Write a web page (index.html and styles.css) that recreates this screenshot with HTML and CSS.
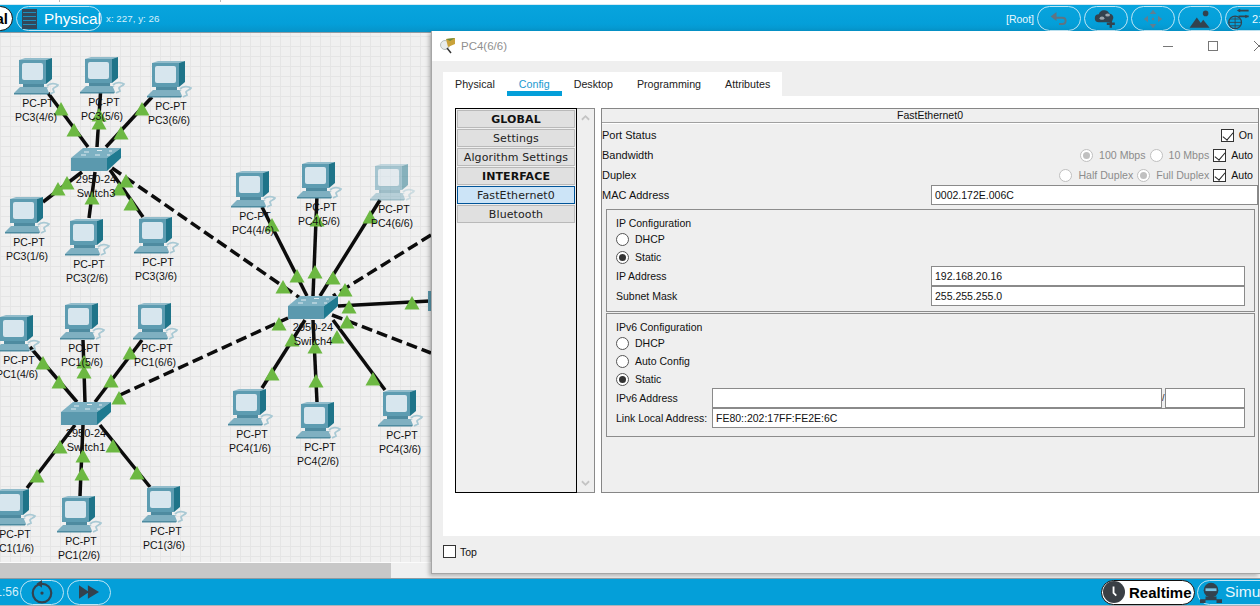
FILE: index.html
```html
<!DOCTYPE html>
<html lang="en">
<head>
<meta charset="utf-8">
<title>Packet Tracer</title>
<link rel="stylesheet" href="styles.css">
</head>
<body>
<div class="app">
  <div class="strip"><i class="tick"></i><i class="tick"></i></div>
  <header class="topbar">
    <div class="cluster">
      <div class="pill pill-active pill-logical">Logical</div>
      <div class="pill pill-physical">
        <svg class="ico-rack" viewBox="0 0 15 20"><rect width="15" height="20" fill="#33485a"/><path d="M1 3.500h13M1 7.500h13M1 11.500h13M1 15.500h13" stroke="#1d8fbd" stroke-width="1.200"/></svg>
        <span>Physical</span>
      </div>
      <span class="coords">x: 227, y: 26</span>
    </div>
    <div class="cluster cluster-right">
      <span class="root">[Root]</span>
      <div class="pill pill-tool">
        <svg viewBox="0 0 24 20" class="ico"><path d="M8 8.500h8c3 0 4 1.500 4 3.500s-1 4-4 4h-4" fill="none" stroke="#5f7482" stroke-width="2.200"/><path d="M9 1.500 2 7l7 5.500z" fill="#5f7482"/></svg>
      </div>
      <div class="pill pill-tool">
        <svg viewBox="0 0 30 24" class="ico ico-w"><path d="M6 16a5 5 0 0 1 0-10 7 7 0 0 1 13-1 5.500 5.500 0 0 1 4 9l-1 2z" fill="#33424e"/><ellipse cx="10" cy="11" rx="3" ry="2" fill="#9aa5ad"/><ellipse cx="17" cy="7" rx="3" ry="2" fill="#9aa5ad"/><path d="M21 13v10M16 18h10" stroke="#33424e" stroke-width="3"/></svg>
      </div>
      <div class="pill pill-tool">
        <svg viewBox="0 0 24 24" class="ico"><path d="M12 1l4 5H8zM12 23l-4-5h8zM1 12l5-4v8zM23 12l-5 4V8z" fill="#5f7f92"/><circle cx="12" cy="12" r="1.500" fill="#5f7f92"/></svg>
      </div>
      <div class="pill pill-tool">
        <svg viewBox="0 0 30 24" class="ico ico-w"><path d="M2 23 11 10l5 7 3-4 8 10z" fill="#33424e"/><circle cx="22" cy="5" r="3.500" fill="#33424e"/></svg>
      </div>
      <div class="pill pill-tool pill-last">
        <svg viewBox="0 0 26 26" class="ico-globe"><circle cx="9" cy="17" r="7.500" fill="none" stroke="#33424e" stroke-width="1.500"/><path d="M1.500 17h15M9 9.500v15M3 13h12M3 21h12" stroke="#33424e"/><path d="M13 3h12M13 10h12" stroke="#33424e" stroke-width="2"/><path d="M15 1l-4 2 4 2zM21 8l4 2-4 2z" fill="#33424e"/></svg>
        <span class="pill-num">21</span>
      </div>
    </div>
  </header>

  <main class="workspace">
    <svg class="diagram" viewBox="0 33 1260 529">
      <defs>
        <symbol id="pc" viewBox="0 0 46 37" width="46" height="37" overflow="visible">
          <path d="M33 28c3-3 8-3 11-1-1 2-4 2-5 4l1 3-4 2" fill="none" stroke="#a9c9d4" stroke-width="1.800"/>
          <path d="M5 2 11 0h27l-6 2z" fill="#92bccb"/>
          <path d="M32 2l6-2v21l-6 5z" fill="#1f7489"/>
          <rect x="5" y="2" width="27" height="24" fill="#5d9cb1"/>
          <rect x="8" y="5" width="21" height="17" rx="2" fill="#d7e6ee"/>
          <rect x="9" y="26" width="21" height="3" fill="#4e8ba0"/>
          <path d="M6 29h26l3 1H5z" fill="#7eafc0"/>
          <path d="M5 30h28l2 5H0z" fill="#7fb0c1"/>
          <path d="M0 35h35l-1 1.500H0z" fill="#4e8ba0"/>
        </symbol>
        <symbol id="sw" viewBox="0 0 50 24" width="50" height="24" overflow="visible">
          <path d="M0 11 12 1h38L36 11z" fill="#7db1c3"/>
          <path d="M36 11 50 1v10L36 24z" fill="#1f7a90"/>
          <rect y="11" width="36" height="13" fill="#5b99ae"/>
          <path d="M13 5h5M26 3.500h5M10 8h5M24 8h5M38 4h3M36 8h3" stroke="#dfecf1" stroke-width="1.200"/>
        </symbol>
        <polygon id="tri" points="-7.500,6.500 0,-7 7.500,6.500" fill="#6cb842"/>
      </defs>

      <g class="links">
        <line x1="48" y1="93" x2="88" y2="147"/><line x1="101" y1="85" x2="97" y2="147"/><line x1="152" y1="97" x2="106" y2="147"/>
        <line x1="43" y1="202" x2="82" y2="172"/><line x1="89" y1="218" x2="95" y2="172"/><line x1="143" y1="217" x2="110" y2="170"/>
        <line x1="262" y1="207" x2="307" y2="296"/><line x1="317" y1="195" x2="313" y2="296"/><line x1="380" y1="200" x2="320" y2="296"/>
        <line x1="338" y1="306" x2="430" y2="301"/>
        <line x1="262" y1="388" x2="305" y2="320"/><line x1="317" y1="402" x2="313" y2="320"/><line x1="385" y1="390" x2="333" y2="320"/>
        <line x1="30" y1="347" x2="77" y2="402"/><line x1="83" y1="340" x2="85" y2="402"/><line x1="142" y1="340" x2="95" y2="402"/>
        <line x1="27" y1="488" x2="75" y2="425"/><line x1="80" y1="496" x2="83" y2="425"/><line x1="150" y1="487" x2="100" y2="425"/>
      </g>
      <g class="links links-dashed">
        <line x1="112" y1="168" x2="300" y2="298"/><line x1="431" y1="235" x2="333" y2="296"/>
        <line x1="332" y1="315" x2="431" y2="353"/><line x1="120" y1="395" x2="288" y2="318"/>
      </g>
      <rect class="edge-device" x="428" y="291" width="4" height="20"/>

      <use href="#tri" x="61" y="109"/><use href="#tri" x="74" y="130"/><use href="#tri" x="99" y="115"/><use href="#tri" x="99" y="123"/>
      <use href="#tri" x="142" y="109"/><use href="#tri" x="121" y="133"/><use href="#tri" x="67" y="183"/><use href="#tri" x="58" y="189"/>
      <use href="#tri" x="92" y="198"/><use href="#tri" x="119" y="189"/><use href="#tri" x="126" y="181"/><use href="#tri" x="131" y="204"/>
      <use href="#tri" x="272" y="225"/><use href="#tri" x="317" y="220"/><use href="#tri" x="370" y="217"/><use href="#tri" x="297" y="276"/>
      <use href="#tri" x="315" y="272"/><use href="#tri" x="333" y="278"/><use href="#tri" x="283" y="287"/><use href="#tri" x="345" y="290"/>
      <use href="#tri" x="349" y="307"/><use href="#tri" x="347" y="322"/><use href="#tri" x="412" y="303"/><use href="#tri" x="337" y="337"/>
      <use href="#tri" x="279" y="324"/><use href="#tri" x="292" y="340"/><use href="#tri" x="315" y="347"/><use href="#tri" x="272" y="374"/>
      <use href="#tri" x="316" y="381"/><use href="#tri" x="373" y="379"/>
      <use href="#tri" x="43" y="363"/><use href="#tri" x="59" y="382"/><use href="#tri" x="84" y="362"/><use href="#tri" x="84" y="372"/>
      <use href="#tri" x="130" y="353"/><use href="#tri" x="111" y="381"/><use href="#tri" x="119" y="398"/><use href="#tri" x="60" y="447"/>
      <use href="#tri" x="37" y="476"/><use href="#tri" x="83" y="456"/><use href="#tri" x="82" y="474"/><use href="#tri" x="113" y="446"/><use href="#tri" x="137" y="473"/>

      <g class="node" transform="translate(14 58)"><use href="#pc"/><text x="24" y="49">PC-PT</text><text x="22" y="63">PC3(4/6)</text></g>
      <g class="node" transform="translate(80 57)"><use href="#pc"/><text x="24" y="49">PC-PT</text><text x="22" y="63">PC3(5/6)</text></g>
      <g class="node" transform="translate(147 61)"><use href="#pc"/><text x="24" y="49">PC-PT</text><text x="22" y="63">PC3(6/6)</text></g>
      <g class="node" transform="translate(5 197)"><use href="#pc"/><text x="24" y="49">PC-PT</text><text x="22" y="63">PC3(1/6)</text></g>
      <g class="node" transform="translate(65 219)"><use href="#pc"/><text x="24" y="49">PC-PT</text><text x="22" y="63">PC3(2/6)</text></g>
      <g class="node" transform="translate(134 217)"><use href="#pc"/><text x="24" y="49">PC-PT</text><text x="22" y="63">PC3(3/6)</text></g>
      <g class="node" transform="translate(231 171)"><use href="#pc"/><text x="24" y="49">PC-PT</text><text x="22" y="63">PC4(4/6)</text></g>
      <g class="node" transform="translate(297 162)"><use href="#pc"/><text x="24" y="49">PC-PT</text><text x="22" y="63">PC4(5/6)</text></g>
      <g class="node" transform="translate(370 164)"><use class="faded" href="#pc"/><text x="24" y="49">PC-PT</text><text x="22" y="63">PC4(6/6)</text></g>
      <g class="node" transform="translate(228 389)"><use href="#pc"/><text x="24" y="49">PC-PT</text><text x="22" y="63">PC4(1/6)</text></g>
      <g class="node" transform="translate(296 402)"><use href="#pc"/><text x="24" y="49">PC-PT</text><text x="22" y="63">PC4(2/6)</text></g>
      <g class="node" transform="translate(378 390)"><use href="#pc"/><text x="24" y="49">PC-PT</text><text x="22" y="63">PC4(3/6)</text></g>
      <g class="node" transform="translate(-5 315)"><use href="#pc"/><text x="24" y="49">PC-PT</text><text x="22" y="63">PC1(4/6)</text></g>
      <g class="node" transform="translate(60 303)"><use href="#pc"/><text x="24" y="49">PC-PT</text><text x="22" y="63">PC1(5/6)</text></g>
      <g class="node" transform="translate(133 303)"><use href="#pc"/><text x="24" y="49">PC-PT</text><text x="22" y="63">PC1(6/6)</text></g>
      <g class="node" transform="translate(-9 489)"><use href="#pc"/><text x="24" y="49">PC-PT</text><text x="22" y="63">PC1(1/6)</text></g>
      <g class="node" transform="translate(57 496)"><use href="#pc"/><text x="24" y="49">PC-PT</text><text x="22" y="63">PC1(2/6)</text></g>
      <g class="node" transform="translate(142 486)"><use href="#pc"/><text x="24" y="49">PC-PT</text><text x="22" y="63">PC1(3/6)</text></g>

      <g class="node node-switch" transform="translate(71 147)"><use href="#sw"/><text x="25" y="36">2950-24</text><text x="25" y="50">Switch3</text></g>
      <g class="node node-switch" transform="translate(288 295)"><use href="#sw"/><text x="25" y="36">2950-24</text><text x="25" y="50">Switch4</text></g>
      <g class="node node-switch" transform="translate(61 401)"><use href="#sw"/><text x="25" y="36">2950-24</text><text x="25" y="50">Switch1</text></g>
    </svg>
    <div class="hscroll"><div class="hscroll-thumb"></div></div>

    <section class="dialog">
      <div class="titlebar">
        <svg class="title-ico" viewBox="0 0 16 16"><circle cx="5" cy="7" r="4.500" fill="#e8eceb" stroke="#b5bdb9"/><path d="M6 1l9-1v6l-7 3z" fill="#c9a23a"/><path d="M6 1l9-1-5 3z" fill="#6c8a3a"/><path d="M7 10l4 5" stroke="#333" stroke-width="1.500"/></svg>
        <span class="title-text">PC4(6/6)</span>
        <span class="win-min"></span>
        <span class="win-max"></span>
        <svg class="win-close" viewBox="0 0 10 10"><path d="M0 0l10 10M0 10 10 0" stroke="#6f6f6f" fill="none"/></svg>
      </div>
      <nav class="tabs">
        <span class="tab">Physical</span>
        <span class="tab tab-on">Config</span>
        <span class="tab">Desktop</span>
        <span class="tab">Programming</span>
        <span class="tab">Attributes</span>
      </nav>
      <div class="panel">
        <aside class="sidebar">
          <ul class="menu">
            <li class="menu-item menu-head">GLOBAL</li>
            <li class="menu-item">Settings</li>
            <li class="menu-item">Algorithm Settings</li>
            <li class="menu-item menu-head">INTERFACE</li>
            <li class="menu-item menu-sel">FastEthernet0</li>
            <li class="menu-item">Bluetooth</li>
          </ul>
          <div class="vscroll">
            <svg class="chev" viewBox="0 0 10 7"><path d="M1 6l4-4 4 4" fill="none" stroke="#c4c4c4" stroke-width="2"/></svg>
            <svg class="chev" viewBox="0 0 10 7"><path d="M1 1l4 4 4-4" fill="none" stroke="#c4c4c4" stroke-width="2"/></svg>
          </div>
        </aside>
        <div class="details">
          <div class="details-head">FastEthernet0</div>
          <div class="row">
            <span class="row-label">Port Status</span>
            <span class="opts"><i class="check"></i><span class="opt-text">On</span></span>
          </div>
          <div class="row">
            <span class="row-label">Bandwidth</span>
            <span class="opts opts-off">
              <i class="radio radio-off radio-dot"></i><span class="opt-text">100 Mbps</span>
              <i class="radio radio-off"></i><span class="opt-text">10 Mbps</span>
              <i class="check"></i><span class="opt-text opt-on">Auto</span>
            </span>
          </div>
          <div class="row">
            <span class="row-label">Duplex</span>
            <span class="opts opts-off">
              <i class="radio radio-off"></i><span class="opt-text">Half Duplex</span>
              <i class="radio radio-off radio-dot"></i><span class="opt-text">Full Duplex</span>
              <i class="check"></i><span class="opt-text opt-on">Auto</span>
            </span>
          </div>
          <div class="row">
            <span class="row-label row-label-mac">MAC Address</span>
            <div class="field field-mac">0002.172E.006C</div>
          </div>

          <div class="group group-v4">
            <div class="group-title">IP Configuration</div>
            <div class="choice"><i class="radio"></i>DHCP</div>
            <div class="choice"><i class="radio radio-dot"></i>Static</div>
            <div class="frow"><span class="flabel">IP Address</span><div class="field field-v4">192.168.20.16</div></div>
            <div class="frow"><span class="flabel">Subnet Mask</span><div class="field field-v4">255.255.255.0</div></div>
          </div>
          <div class="group group-v6">
            <div class="group-title">IPv6 Configuration</div>
            <div class="choice"><i class="radio"></i>DHCP</div>
            <div class="choice"><i class="radio"></i>Auto Config</div>
            <div class="choice"><i class="radio radio-dot"></i>Static</div>
            <div class="frow"><span class="flabel flabel-v6">IPv6 Address</span><div class="field field-v6"></div><span class="slash">/</span><div class="field field-prefix"></div></div>
            <div class="frow"><span class="flabel flabel-v6">Link Local Address:</span><div class="field field-link">FE80::202:17FF:FE2E:6C</div></div>
          </div>
        </div>
      </div>
      <footer class="dialog-foot"><i class="check check-empty"></i><span>Top</span></footer>
    </section>
  </main>

  <footer class="bottombar">
    <div class="cluster">
      <span class="clock-text">00:01:56</span>
      <div class="pill pill-tool">
        <svg viewBox="0 0 22 22" class="ico ico-big"><circle cx="11" cy="12" r="8.500" fill="none" stroke="#33424e" stroke-width="2"/><circle cx="11" cy="12" r="1.500" fill="#33424e"/><path d="M11 0l-5 3.500L11 7z" fill="#33424e"/></svg>
      </div>
      <div class="pill pill-tool">
        <svg viewBox="0 0 18 12" class="ico"><path d="M0 0l9 6-9 6zM8 0l10 6-10 6z" fill="#33424e"/></svg>
      </div>
    </div>
    <div class="cluster cluster-bottom">
      <div class="pill pill-active pill-realtime">
        <svg viewBox="0 0 24 24" class="ico-clock"><circle cx="12" cy="12" r="12" fill="#3a3f45"/><path d="M11.500 6v7l3 3" fill="none" stroke="#fff" stroke-width="2"/></svg>
        <span>Realtime</span>
      </div>
      <div class="pill pill-sim">
        <svg viewBox="0 0 24 24" class="ico-clock"><circle cx="12" cy="10" r="8" fill="#33424e"/><rect x="6" y="8" width="12" height="3" fill="#7cc4e4"/><path d="M0 20h6v4H0zM18 20h6v4h-6zM6 17h12v4H6z" fill="#33424e"/></svg>
        <span>Simulation</span>
      </div>
    </div>
  </footer>
</div>
</body>
</html>
```

FILE: styles.css
```css
* { box-sizing: border-box; }
html, body { margin: 0; padding: 0; }
body { width: 1260px; height: 606px; overflow: hidden; font-family: "Liberation Sans", Arial, sans-serif; color: #111; background: #fff; }
i { font-style: normal; display: block; flex: none; }
ul { list-style: none; margin: 0; padding: 0; }

.app { width: 1260px; height: 606px; display: flex; flex-direction: column; overflow: hidden; }
.strip { height: 5px; flex: none; background: #fff; display: flex; align-items: flex-start; gap: 160px; padding-left: 59px; border-bottom: 1px solid #d5eaf3; }
.tick { width: 1px; height: 2px; background: #bbb; }

.topbar { height: 28px; flex: none; display: flex; justify-content: space-between; align-items: center; background: linear-gradient(#08a4dd, #049fd9 70%, #0793c8); border-bottom: 1px solid #8f9ba2; position: relative; }
.cluster { display: flex; align-items: center; gap: 3px; }
.cluster-right { margin-right: -25px; }
.pill { height: 25px; flex: none; border-radius: 13px; border: 1px solid #bfe6f5; display: flex; align-items: center; justify-content: center; }
.pill-active { background: #fff; border-color: #111; color: #000; font-weight: 700; }
.pill-logical { width: 44px; margin-left: -31px; justify-content: flex-end; padding-right: 4px; font-size: 15px; overflow: hidden; }
.pill-physical { width: 86px; color: #fff; font-size: 15.300px; justify-content: flex-start; padding-left: 5px; gap: 7px; }
.ico-rack { width: 15px; height: 20px; flex: none; }
.coords { color: #d6f0fb; font-size: 9.800px; margin-left: 1px; }
.root { color: #e9f8fe; font-size: 10.500px; }
.pill-tool { width: 44px; }
.pill-last { width: 60px; justify-content: flex-start; padding-left: 0; gap: 1px; color: #e9f8fe; font-size: 11px; }
.ico { width: 20px; height: 20px; }
.ico-w { width: 24px; height: 20px; }
.ico-big { width: 24px; height: 24px; }
.ico-globe { width: 25px; height: 22px; flex: none; }
.pill-num { white-space: nowrap; }

.workspace { flex: 1; position: relative; min-height: 0; background-color: #f0f0f0; background-image: linear-gradient(#e5e5e5 1px, transparent 1px), linear-gradient(90deg, #e5e5e5 1px, transparent 1px); background-size: 10px 10px; background-position: 0 3px; }
.diagram { display: block; width: 1260px; height: 529px; }
.links line { stroke: #0c0c0c; stroke-width: 3.500; }
.links-dashed line { stroke-dasharray: 11 5; }
.edge-device { fill: #5b99ae; }
.node text { font-family: "Liberation Sans", Arial, sans-serif; font-size: 10.500px; text-anchor: middle; fill: #111; }
.node-switch text { font-size: 11px; }
.faded { opacity: .5; }
.hscroll { height: 17px; background: #f0f0f0; border-top: 1px solid #fbfbfb; }
.hscroll-thumb { width: 391px; height: 100%; background: #c8c8c8; }

.dialog { position: absolute; left: 431px; top: -2px; width: 829px; height: 543px; display: flex; flex-direction: column; background: #efefef; border-left: 1px solid #a6a6a6; border-bottom: 1px solid #a6a6a6; box-shadow: -2px 2px 4px rgba(0, 0, 0, .25); overflow: hidden; }
.titlebar { height: 30px; flex: none; background: #fff; display: flex; align-items: center; padding-left: 8px; position: relative; }
.title-ico { width: 16px; height: 16px; flex: none; }
.title-text { font-size: 11.500px; color: #8f8f8f; margin-left: 5px; width: 702px; flex: none; }
.win-min { width: 10px; height: 1px; background: #777; flex: none; }
.win-max { width: 10px; height: 10px; border: 1px solid #777; flex: none; margin-left: 35px; }
.win-close { width: 10px; height: 10px; flex: none; margin-left: 36px; }

.tabs { height: 35px; flex: none; padding: 11px 0 0 11px; display: flex; }
.tabs .tab { height: 24px; padding: 0 12px; background: #fff; font-size: 10.700px; line-height: 24px; color: #222; flex: none; }
.tabs .tab-on { color: #1c9ad0; border-bottom: 5px solid #049fd9; }

.panel { flex: 1; min-height: 0; margin-left: 11px; background: #fff; padding: 12px 0 43px 12px; display: flex; gap: 6px; }
.sidebar { width: 140px; flex: none; display: flex; background: #efefef; }
.menu { width: 122px; border: 1px solid #000; padding: 1px; flex: none; }
.menu-item { height: 18px; margin-bottom: 1px; background: #e0e0e0; border: 1px solid #b9b9b9; font-family: "DejaVu Sans", sans-serif; font-size: 11px; line-height: 17px; text-align: center; white-space: nowrap; letter-spacing: .1px; color: #222; }
.menu-head { font-weight: 700; color: #111; }
.menu-sel { background: #cce4f7; border-color: #005499; }
.vscroll { flex: 1; border: 1px solid #8a8a8a; border-left: 0; display: flex; flex-direction: column; justify-content: space-between; align-items: center; padding: 5px 0; }
.chev { width: 9px; height: 7px; }

.details { width: 658px; flex: none; background: #efefef; border: 1px solid #868686; font-size: 11px; }
.details-head { height: 14px; line-height: 13px; text-align: center; border-bottom: 1px solid #a0a0a0; box-shadow: 0 1px 0 #fff; font-size: 10.500px; margin-bottom: 2px; }
.row { height: 20px; display: flex; align-items: center; justify-content: space-between; padding: 0 5px 0 0; }
.row-label-mac { width: 329px; flex: none; }
.opts { display: flex; align-items: center; font-size: 10.600px; }
.opt-text { margin-left: 5px; margin-right: 4px; white-space: nowrap; }
.opts > .opt-text:last-child { margin-right: 0; }
.opts-off .opt-text { color: #8c8c8c; }
.opts-off .opt-on { color: #111; }
.check { width: 13px; height: 13px; background: #fff; border: 1px solid #333; position: relative; }
.check::after { content: ""; position: absolute; left: 3px; top: 0; width: 5px; height: 9px; border: solid #222; border-width: 0 1px 1px 0; transform: rotate(40deg); }
.check-empty::after { display: none; }
.radio { width: 13px; height: 13px; border-radius: 50%; background: #fff; border: 1px solid #555; margin-right: 6px; position: relative; }
.opts .radio { margin-right: 1px; }
.radio-off { border-color: #c0c0c0; }
.radio-dot::after { content: ""; position: absolute; left: 2px; top: 2px; width: 7px; height: 7px; border-radius: 50%; background: #333; }
.radio-off.radio-dot::after { background: #c0c0c0; }

.field { height: 20px; flex: none; background: #fff; border: 1px solid #8a8a8a; padding-left: 3px; line-height: 18px; font-size: 10.500px; }
.row .field { margin-right: -5px; }
.field-mac { width: 327px; }
.group { width: 649px; margin-left: 4px; border: 1px solid #8c8c8c; padding-left: 9px; font-size: 10.500px; }
.group-v4 { margin-top: 4px; height: 103px; }
.group-v6 { margin-top: 1px; height: 124px; }
.group-title { height: 20px; padding-top: 6px; line-height: 15px; }
.choice { height: 18px; display: flex; align-items: center; }
.frow { height: 20px; display: flex; align-items: center; }
.flabel { width: 315px; flex: none; }
.flabel-v6 { width: 96px; white-space: nowrap; }
.field-v4 { width: 314px; }
.field-v6 { width: 450px; }
.slash { width: 3px; flex: none; font-size: 9px; overflow: hidden; }
.field-prefix { width: 80px; }
.field-link { width: 533px; }

.dialog-foot { height: 37px; flex: none; display: flex; align-items: center; padding-left: 11px; gap: 4px; font-size: 10.500px; padding-bottom: 6px; }

.bottombar { height: 28px; flex: none; display: flex; justify-content: space-between; align-items: center; background: #049fd9; border-top: 1px solid #8f9ba2; border-bottom: 1px solid #aab3b8; position: relative; }
.clock-text { color: #d6f0fb; font-size: 12px; width: 45px; margin-left: -28px; text-align: right; white-space: nowrap; flex: none; }
.cluster-bottom { margin-right: -44px; gap: 2px; }
.pill-realtime { width: 94px; font-size: 15px; justify-content: flex-start; padding-left: 1px; gap: 4px; }
.pill-sim { width: 107px; color: #e9f8fe; font-size: 15.500px; justify-content: flex-start; padding-left: 2px; gap: 3px; }
.ico-clock { width: 22px; height: 22px; flex: none; }
```
